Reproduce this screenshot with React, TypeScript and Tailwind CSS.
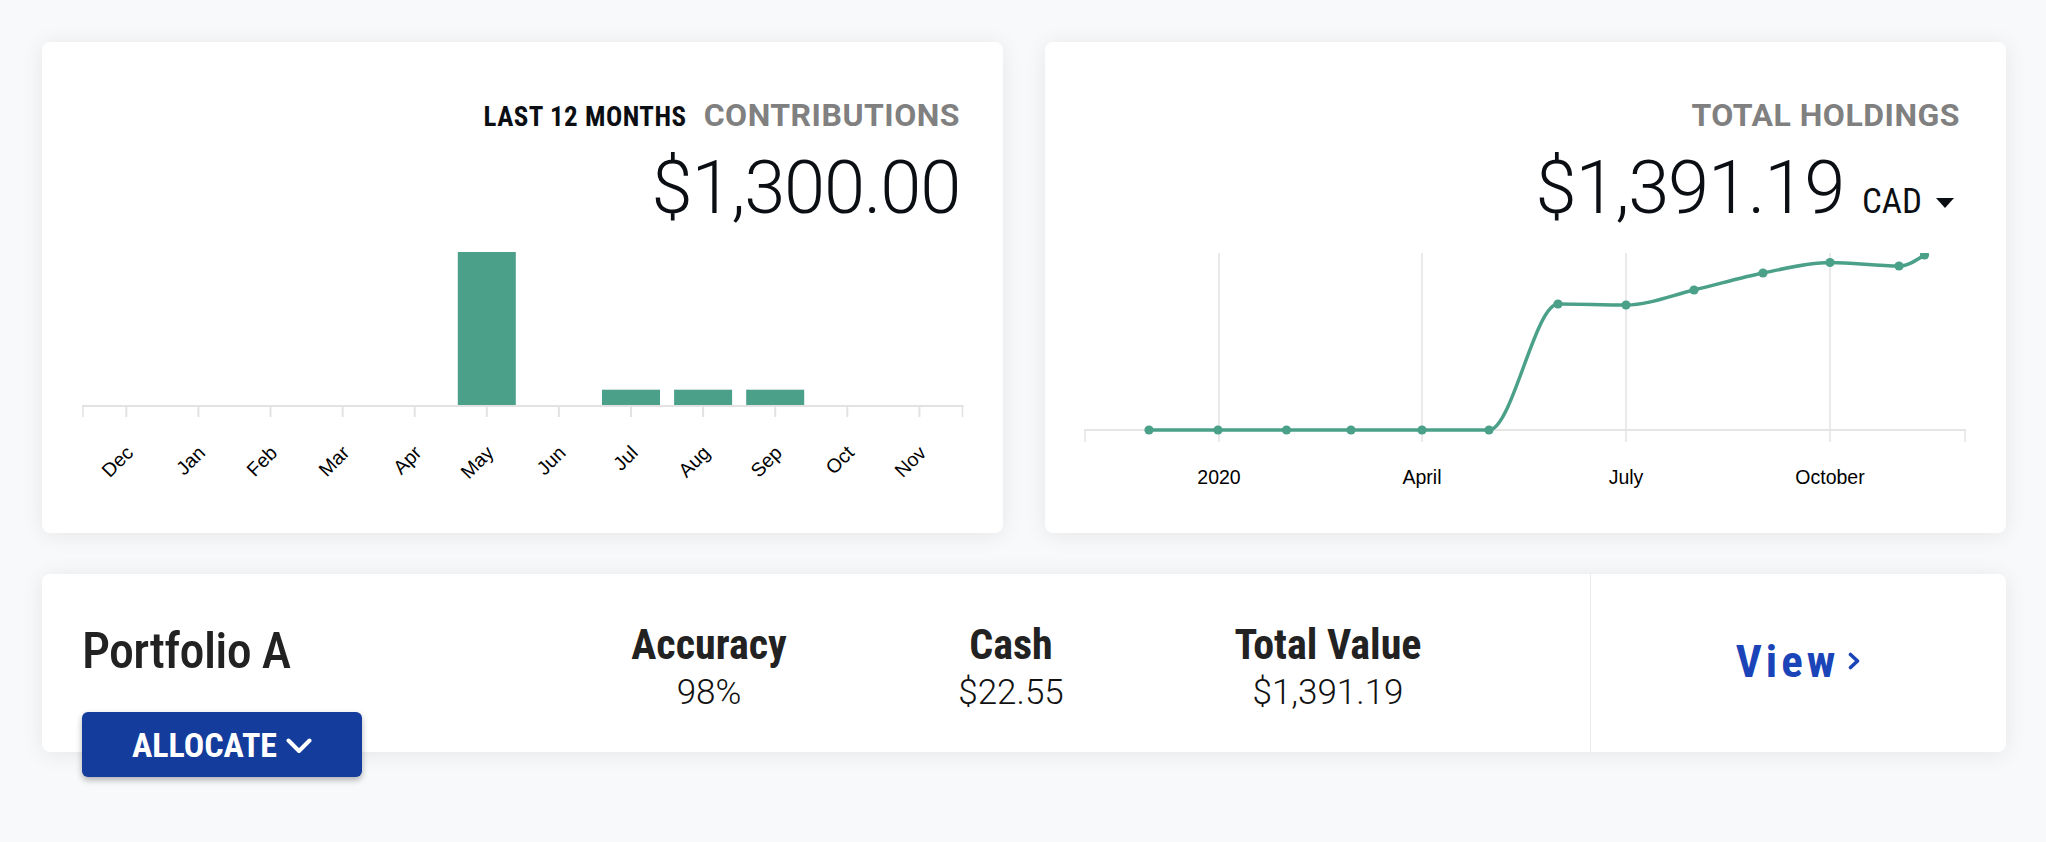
import React from "react";

type Pt = [number, number];

function monotonePath(pts: Pt[]): string {
  const n = pts.length;
  const sgn = (v: number) => (v < 0 ? -1 : 1);
  const t: number[] = new Array(n).fill(0);
  for (let i = 1; i < n - 1; i++) {
    const [x0, y0] = pts[i - 1];
    const [x1, y1] = pts[i];
    const [x2, y2] = pts[i + 1];
    const h0 = x1 - x0;
    const h1 = x2 - x1;
    const s0 = (y1 - y0) / h0;
    const s1 = (y2 - y1) / h1;
    const p = (s0 * h1 + s1 * h0) / (h0 + h1);
    t[i] = (sgn(s0) + sgn(s1)) * Math.min(Math.abs(s0), Math.abs(s1), 0.5 * Math.abs(p)) || 0;
  }
  {
    const h = pts[1][0] - pts[0][0];
    t[0] = (3 * (pts[1][1] - pts[0][1]) / h - t[1]) / 2;
    const h2 = pts[n - 1][0] - pts[n - 2][0];
    t[n - 1] = (3 * (pts[n - 1][1] - pts[n - 2][1]) / h2 - t[n - 2]) / 2;
  }
  let d = `M${pts[0][0]},${pts[0][1]}`;
  for (let i = 0; i < n - 1; i++) {
    const [x0, y0] = pts[i];
    const [x1, y1] = pts[i + 1];
    const dx = (x1 - x0) / 3;
    d += ` C${x0 + dx},${y0 + dx * t[i]} ${x1 - dx},${y1 - dx * t[i + 1]} ${x1},${y1}`;
  }
  return d;
}

const GREEN = "#4aa088";
const months = ["Dec", "Jan", "Feb", "Mar", "Apr", "May", "Jun", "Jul", "Aug", "Sep", "Oct", "Nov"];
const contrib = [0, 0, 0, 0, 0, 1000, 0, 100, 100, 100, 0, 0];

function BarChart() {
  const tickX = (i: number) => 84.3 + 72.1 * i;
  return (
    <svg width={961} height={290} className="block">
      {contrib.map((v, i) =>
        v > 0 ? (
          <rect key={i} x={tickX(i) - 29} y={180 - v * 0.153} width={58} height={v * 0.153} fill={GREEN} />
        ) : null
      )}
      <line x1={40} x2={921.5} y1={181} y2={181} stroke="#e2e2e2" strokeWidth={2} />
      <line x1={41} x2={41} y1={181} y2={192} stroke="#e2e2e2" strokeWidth={1.5} />
      <line x1={920.5} x2={920.5} y1={181} y2={192} stroke="#e2e2e2" strokeWidth={1.5} />
      {months.map((m, i) => (
        <g key={m}>
          <line x1={tickX(i)} x2={tickX(i)} y1={181} y2={192} stroke="#e2e2e2" strokeWidth={2} />
          <text
            x={tickX(i) + 8}
            y={229}
            textAnchor="end"
            transform={`rotate(-45 ${tickX(i) + 8} 229)`}
            fontFamily="'Liberation Sans', Arial, sans-serif"
            fontSize={19.5}
            fill="#000"
          >
            {m}
          </text>
        </g>
      ))}
    </svg>
  );
}

const linePts: Pt[] = [
  [104, 177],
  [173, 177],
  [241.5, 177],
  [306, 177],
  [377, 177],
  [444, 177],
  [513, 51],
  [581, 52],
  [649, 37],
  [718, 20],
  [785, 9.5],
  [854, 13],
  [879.5, 2],
];

function LineChart() {
  const grid = [
    { x: 174, label: "2020" },
    { x: 377, label: "April" },
    { x: 581, label: "July" },
    { x: 785, label: "October" },
  ];
  return (
    <svg width={961} height={245} className="block overflow-hidden">
      {grid.map((g) => (
        <line key={g.x} x1={g.x} x2={g.x} y1={0} y2={189} stroke="#e3e3e3" strokeWidth={1.5} />
      ))}
      <line x1={39} x2={921} y1={177} y2={177} stroke="#e5e5e5" strokeWidth={2} />
      <line x1={40} x2={40} y1={177} y2={189} stroke="#e5e5e5" strokeWidth={1.5} />
      <line x1={920} x2={920} y1={177} y2={189} stroke="#e5e5e5" strokeWidth={1.5} />
      <path d={monotonePath(linePts)} fill="none" stroke={GREEN} strokeWidth={3.5} />
      {linePts.map(([x, y], i) => (
        <circle key={i} cx={x} cy={y} r={4.6} fill={GREEN} />
      ))}
      {grid.map((g) => (
        <text
          key={g.label}
          x={g.x}
          y={231}
          textAnchor="middle"
          fontFamily="'Liberation Sans', Arial, sans-serif"
          fontSize={19.5}
          fill="#000"
        >
          {g.label}
        </text>
      ))}
    </svg>
  );
}

const N = "font-[family-name:'Roboto_Condensed',Roboto,sans-serif] font-stretch-condensed";

export default function App() {
  return (
    <div className="min-h-[842px] bg-[#f8f9fb] pt-[42px] pl-[42px] pr-[40px]">
      <div className="flex gap-[42px]">
        {/* Contributions card */}
        <div className="w-[961px] h-[491px] bg-white rounded-[8px] shadow-[0_2px_22px_rgba(0,0,0,0.08)]">
          <div className="flex flex-col items-end pr-[43px] pt-[57px]">
            <div className="flex items-baseline gap-[17px] h-[32px]">
              <span className={`${N} font-bold text-[27px] leading-[32px] tracking-[0.5px] text-[#0b0f14]`}>
                LAST 12 MONTHS
              </span>
              <span className="font-[family-name:Roboto,sans-serif] font-bold text-[32px] leading-[32px] tracking-[0.5px] text-[#808080]">
                CONTRIBUTIONS
              </span>
            </div>
            <div className="mt-[20px] font-[family-name:Roboto,sans-serif] font-light text-[74px] leading-[74px] tracking-[-1.2px] text-[#0b0f14]">
              $1,300.00
            </div>
          </div>
          <BarChart />
        </div>

        {/* Total holdings card */}
        <div className="w-[961px] h-[491px] bg-white rounded-[8px] shadow-[0_2px_22px_rgba(0,0,0,0.08)]">
          <div className="flex flex-col items-end pr-[46px] pt-[57px]">
            <div className="flex items-baseline h-[32px]">
              <span className="font-[family-name:Roboto,sans-serif] font-bold text-[32px] leading-[32px] tracking-[0.5px] text-[#808080]">
                TOTAL HOLDINGS
              </span>
            </div>
            <div className="mt-[20px] mr-[6px] flex items-baseline">
              <span className="font-[family-name:Roboto,sans-serif] font-light text-[74px] leading-[74px] tracking-[-1.2px] text-[#0b0f14]">
                $1,391.19
              </span>
              <span className={`ml-[18px] ${N} font-normal text-[35px] leading-[35px] text-[#0b0f14]`}>CAD</span>
              <svg width={18} height={10} viewBox="0 0 18 10" className="ml-[14px] self-center mt-[30px]">
                <polygon points="0,0 18,0 9,10" fill="#0b0f14" />
              </svg>
            </div>
          </div>
          <div className="mt-[28px]">
            <LineChart />
          </div>
        </div>
      </div>

      {/* Portfolio card */}
      <div className="mt-[41px] w-[1964px] h-[178px] bg-white rounded-[8px] shadow-[0_2px_22px_rgba(0,0,0,0.08)] flex">
        <div className="w-[567px] shrink-0 pl-[40px] pt-[52px] flex flex-col items-start">
          <div className={`${N} font-medium text-[50px] leading-[50px] tracking-[-0.7px] text-[#222]`}>Portfolio A</div>
          <button className="shrink-0 mt-[36px] w-[280px] h-[65px] rounded-[6px] bg-[#133c9c] shadow-[0_3px_6px_rgba(0,0,0,0.3)] flex items-center justify-center gap-[9px] relative z-10">
            <span className={`${N} font-bold text-[34px] leading-[34px] text-white`}>ALLOCATE</span>
            <svg width={26} height={16} viewBox="0 0 26 16" className="mt-[2px]">
              <polyline points="2.5,2.5 13,13 23.5,2.5" fill="none" stroke="#fff" strokeWidth={4} strokeLinecap="round" strokeLinejoin="round" />
            </svg>
          </button>
        </div>

        <div className="flex gap-[100px] pt-[50px]">
          {[
            { label: "Accuracy", value: "98%", w: "w-[200px]" },
            { label: "Cash", value: "$22.55", w: "w-[204px]" },
            { label: "Total Value", value: "$1,391.19", w: "w-[230px]" },
          ].map((m) => (
            <div key={m.label} className={`${m.w} flex flex-col items-center`}>
              <div className={`${N} font-bold text-[42px] leading-[42px] whitespace-nowrap text-[#222]`}>{m.label}</div>
              <div className="mt-[9px] font-[family-name:Roboto,sans-serif] font-light text-[35px] leading-[35px] text-[#111]">
                {m.value}
              </div>
            </div>
          ))}
        </div>

        <div className="ml-auto w-[416px] border-l border-[#ebebeb] flex items-center justify-center">
          <div className="flex items-center gap-[8px] -mt-[4px]">
            <span className={`${N} font-bold text-[45px] leading-[45px] tracking-[4px] text-[#1a44b8]`}>View</span>
            <svg width={14} height={18} viewBox="0 0 14 18">
              <polyline points="3.5,2.5 10.5,9 3.5,15.5" fill="none" stroke="#1a44b8" strokeWidth={3.6} strokeLinecap="round" strokeLinejoin="round" />
            </svg>
          </div>
        </div>
      </div>
    </div>
  );
}
